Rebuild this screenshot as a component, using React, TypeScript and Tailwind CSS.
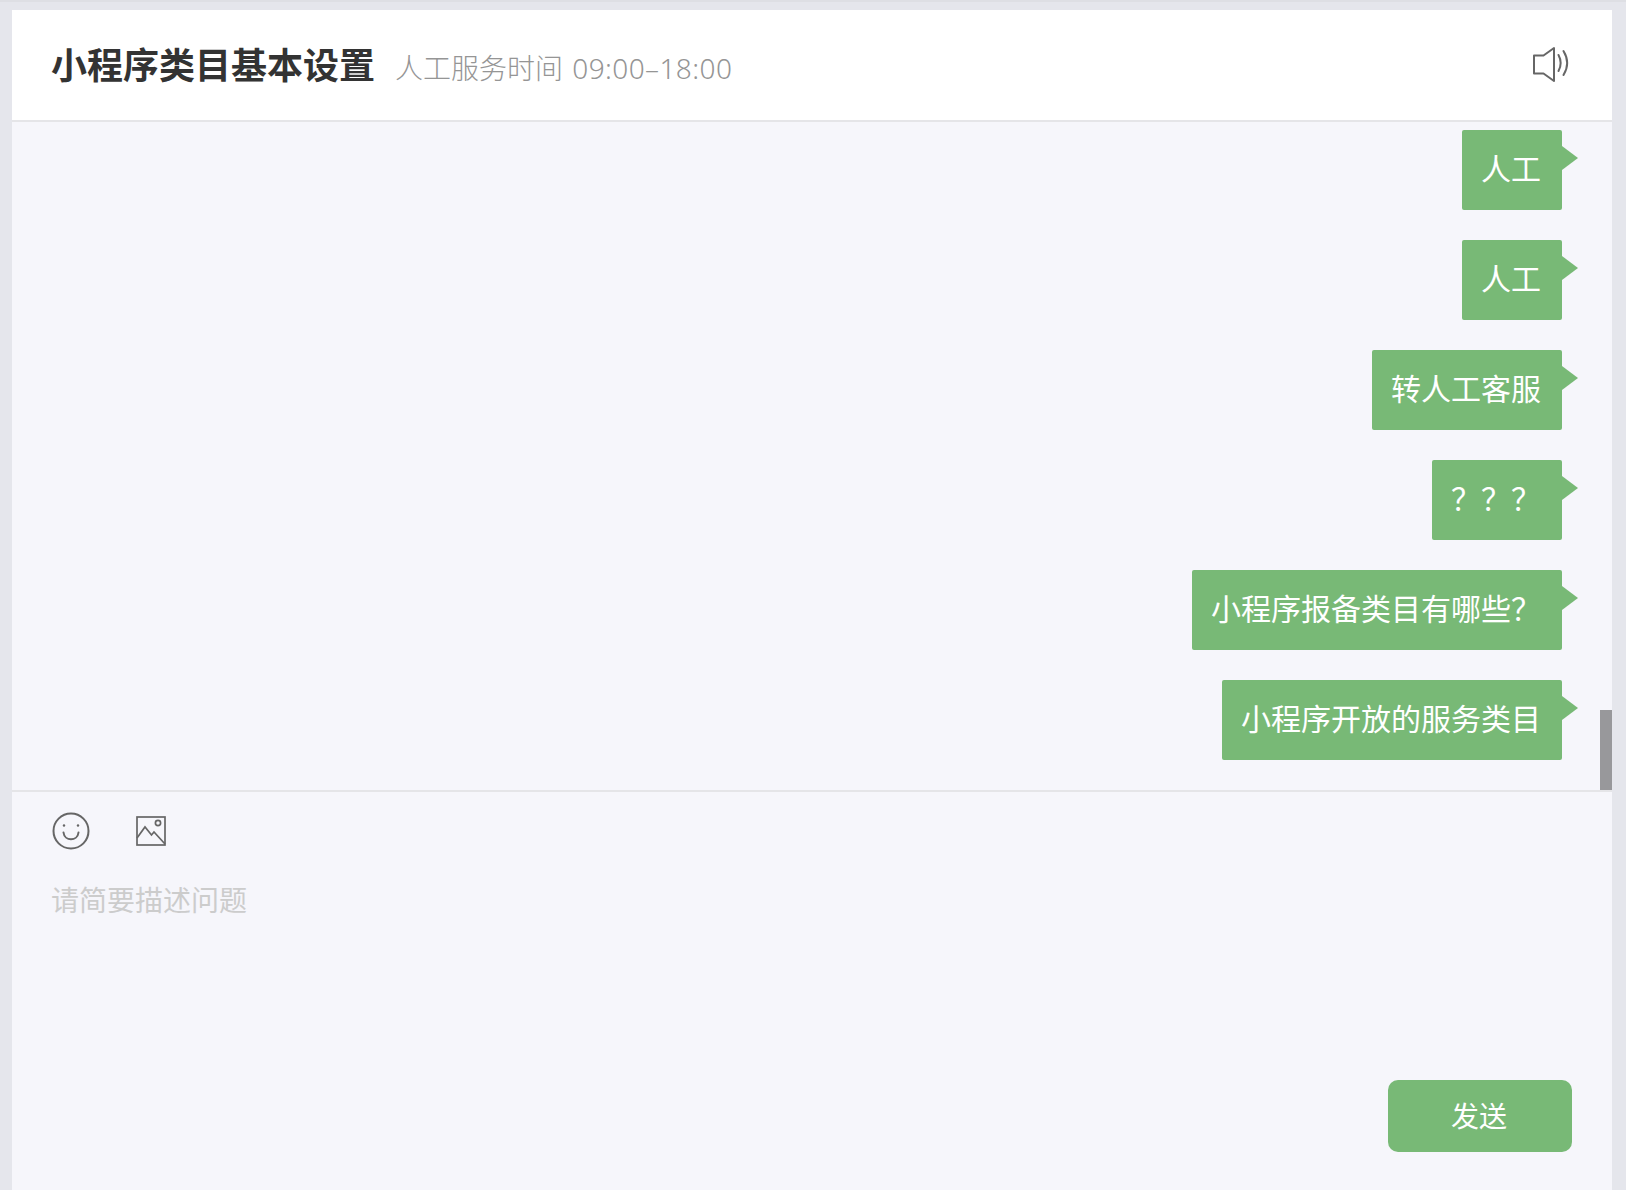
const FONT = "font-['Noto_Sans_CJK_SC','Noto_Sans',sans-serif]";

const messages = ['人工', '人工', '转人工客服', '？？？', '小程序报备类目有哪些？', '小程序开放的服务类目'];

function SpeakerIcon() {
  return (
    <svg className="mb-[2px]" width="38" height="38" viewBox="0 0 38 38" fill="none" stroke="#666" strokeWidth="2">
      <path d="M2 10.500h9.500L22 3v33l-10.500-7.500H2z" strokeLinejoin="round" />
      <path d="M26.500 10c2.600 4.800 2.600 11.200 0 16" strokeLinecap="round" />
      <path d="M31.500 6c4.600 7.500 4.600 16.500 0 24" strokeLinecap="round" />
    </svg>
  );
}

function SmileIcon() {
  return (
    <svg width="38" height="38" viewBox="0 0 38 38" fill="none" stroke="#666" strokeWidth="2">
      <circle cx="19" cy="19" r="17.500" />
      <circle cx="12" cy="13.500" r="1.200" fill="#666" stroke="none" />
      <circle cx="26" cy="13.500" r="1.200" fill="#666" stroke="none" />
      <path d="M11.500 20.500c1 9 14 9 15 0" strokeLinecap="round" />
    </svg>
  );
}

function ImageIcon() {
  return (
    <svg width="30" height="30" viewBox="0 0 30 30" fill="none" stroke="#666" strokeWidth="1.700">
      <rect x="1" y="1" width="28" height="28" />
      <path d="M1 22l8-11 6.500 8 2.500-3 11 12" />
      <circle cx="22" cy="7" r="2.600" />
    </svg>
  );
}

function Bubble({ text }: { text: string }) {
  return (
    <div className="relative h-20 rounded-[2px] bg-[#78b976] pl-[19px] pr-[21px] text-[30px] leading-[74px] text-white">
      {text}
      <span className="absolute left-full top-4 border-y-[12px] border-l-[16px] border-y-transparent border-l-[#78b976]" />
    </div>
  );
}

export default function App() {
  return (
    <div className={`h-[1190px] overflow-hidden border-t-2 border-t-[#dedfe4] bg-[#e5e6ec] px-3 pt-2 ${FONT}`}>
      <div className="flex h-full w-[1600px] flex-col bg-[#f6f6fb]">
        <header className="flex h-[112px] shrink-0 items-center justify-between border-b-2 border-[#e5e5e8] bg-white pl-[39px] pr-[42px]">
          <div className="mb-1 flex items-baseline gap-5">
            <h1 className="text-[36px] font-bold text-[#333]">小程序类目基本设置</h1>
            <span className="font-['Noto_Sans','Noto_Sans_CJK_SC',sans-serif] text-[28px] font-light text-[#959595]">
              人工服务时间 <span className="ml-[2px] tracking-[0.4px]">09:00–18:00</span>
            </span>
          </div>
          <SpeakerIcon />
        </header>

        <div className="relative flex h-[670px] shrink-0 flex-col items-end gap-[30px] border-b-2 border-[#e5e5e8] pr-[50px] pt-2">
          {messages.map((m, i) => (
            <Bubble key={i} text={m} />
          ))}
          <div className="absolute bottom-0 right-0 h-20 w-3 bg-[#98989b]" />
        </div>

        <div className="flex min-h-0 flex-1 flex-col pl-10 pr-10">
          <div className="flex items-center gap-[46px] pt-5">
            <SmileIcon />
            <ImageIcon />
          </div>
          <p className="-ml-px mt-[29px] text-[28px] leading-10 text-[#ccc]">请简要描述问题</p>
          <button className="ml-auto mt-[161px] h-[72px] w-[184px] rounded-[10px] bg-[#78b976] pb-0.5 pr-0.5 text-[28px] text-white">
            发送
          </button>
        </div>
      </div>
    </div>
  );
}
